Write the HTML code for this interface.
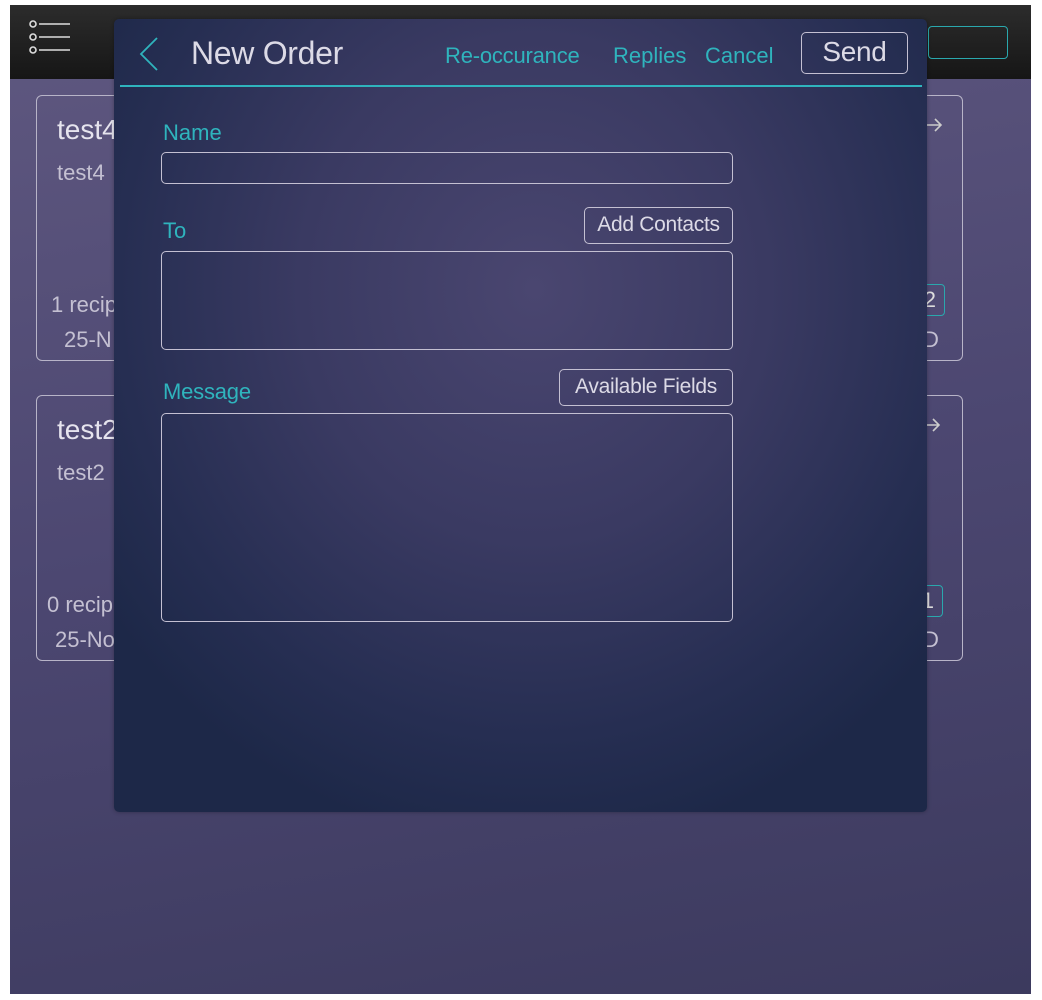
<!DOCTYPE html>
<html><head><meta charset="utf-8"><style>
*{margin:0;padding:0;box-sizing:border-box}
body{width:1042px;height:1000px;background:#fff;position:relative;overflow:hidden;font-family:"Liberation Sans",sans-serif;font-weight:300}
.app{position:absolute;left:10px;top:5px;width:1021px;height:989px;background:linear-gradient(170deg,#5f5880 0%,#4c4771 50%,#3c3a5e 100%);overflow:hidden}
.hdr{position:absolute;left:0;top:0;width:1021px;height:74px;background:linear-gradient(#2c2c2c,#161616)}
.ham{position:absolute;left:18px;top:15px}
.tbox{position:absolute;left:918px;top:21px;width:80px;height:33px;border:1.5px solid #2aa8ad;border-radius:4px}
.card{position:absolute;left:26px;width:927px;height:266px;border:1.5px solid #b8b4c8;border-radius:6px}
.t{position:absolute;color:#e6e4ee;white-space:nowrap}
.g{color:#c4c0d2}
.cbox{position:absolute;width:30px;height:32px;border:1.5px solid #2aa8ad;border-radius:4px;color:#ddd;font-size:22px;text-align:right;padding-right:8px;line-height:29px}
.modal{position:absolute;left:114px;top:19px;width:813px;height:793px;border-radius:5px;background:radial-gradient(ellipse 520px 560px at 420px 270px,#4a4670 0%,#3a3a62 45%,#262e52 80%,#1d2848 100%);box-shadow:0 0 4px rgba(0,0,0,.3)}
.m{position:absolute;white-space:nowrap;color:#2fb4bd}
.w{color:#dcdae6}
.box{position:absolute;border:1.5px solid #c4c0d2;border-radius:5px}
.btn{position:absolute;border:1.5px solid #c4c0d2;border-radius:5px;color:#dcdae6;text-align:center;white-space:nowrap}
</style></head><body>
<div class="app">
 <div class="hdr">
  <svg class="ham" width="44" height="36" viewBox="0 0 44 36" fill="none" stroke="#ddd" stroke-width="1.6">
   <circle cx="5" cy="4" r="3"/><line x1="11" y1="4" x2="42" y2="4"/>
   <circle cx="5" cy="17" r="3"/><line x1="11" y1="17" x2="42" y2="17"/>
   <circle cx="5" cy="30" r="3"/><line x1="11" y1="30" x2="42" y2="30"/>
  </svg>
  <div class="tbox"></div>
 </div>
 <div class="card" style="top:90px">
  <div class="t" style="left:20px;top:18px;font-size:28px">test4</div>
  <div class="t g" style="left:20px;top:64px;font-size:22px">test4</div>
  <div class="t g" style="left:14px;top:196px;font-size:22px">1 recip</div>
  <div class="t g" style="left:27px;top:231px;font-size:22px">25-N</div>
  <svg style="position:absolute;left:888px;top:19px" width="20" height="20" viewBox="0 0 20 20" fill="none" stroke="#ccc" stroke-width="1.6"><path d="M2 10H16M10 4L16 10L10 16"/></svg>
  <div class="cbox" style="left:878px;top:188px">2</div>
  <div class="t g" style="left:886px;top:231px;font-size:22px">D</div>
 </div>
 <div class="card" style="top:390px">
  <div class="t" style="left:20px;top:18px;font-size:28px">test2</div>
  <div class="t g" style="left:20px;top:64px;font-size:22px">test2</div>
  <div class="t g" style="left:10px;top:196px;font-size:22px">0 recip</div>
  <div class="t g" style="left:18px;top:231px;font-size:22px">25-No</div>
  <svg style="position:absolute;left:886px;top:19px" width="20" height="20" viewBox="0 0 20 20" fill="none" stroke="#ccc" stroke-width="1.6"><path d="M2 10H16M10 4L16 10L10 16"/></svg>
  <div class="cbox" style="left:876px;top:189px">1</div>
  <div class="t g" style="left:886px;top:231px;font-size:22px">D</div>
 </div>
</div>
<div class="modal">
 <svg style="position:absolute;left:24px;top:18px" width="22" height="34" viewBox="0 0 22 34" fill="none" stroke="#2fb4bd" stroke-width="1.8"><path d="M19 1L3 17L19 33"/></svg>
 <div class="m w" style="left:77px;top:16px;font-size:32px;letter-spacing:-0.3px">New Order</div>
 <div class="m" style="left:331px;top:24px;font-size:22px;letter-spacing:-0.2px">Re-occurance</div>
 <div class="m" style="left:499px;top:24px;font-size:22px">Replies</div>
 <div class="m" style="left:591px;top:24px;font-size:22px">Cancel</div>
 <div class="btn" style="left:687px;top:13px;width:107px;height:42px;font-size:28px;line-height:38px;letter-spacing:-0.3px">Send</div>
 <div style="position:absolute;left:6px;top:66px;width:802px;height:1.5px;background:#2fb4bd"></div>
 <div class="m" style="left:49px;top:101px;font-size:22px">Name</div>
 <div class="box" style="left:47px;top:133px;width:572px;height:32px"></div>
 <div class="m" style="left:49px;top:199px;font-size:22px">To</div>
 <div class="btn" style="left:470px;top:188px;width:149px;height:37px;font-size:21px;line-height:34px;letter-spacing:-0.3px">Add Contacts</div>
 <div class="box" style="left:47px;top:232px;width:572px;height:99px"></div>
 <div class="m" style="left:49px;top:360px;font-size:22px;letter-spacing:-0.2px">Message</div>
 <div class="btn" style="left:445px;top:350px;width:174px;height:37px;font-size:21px;line-height:34px;letter-spacing:-0.3px">Available Fields</div>
 <div class="box" style="left:47px;top:394px;width:572px;height:209px"></div>
</div>
</body></html>
